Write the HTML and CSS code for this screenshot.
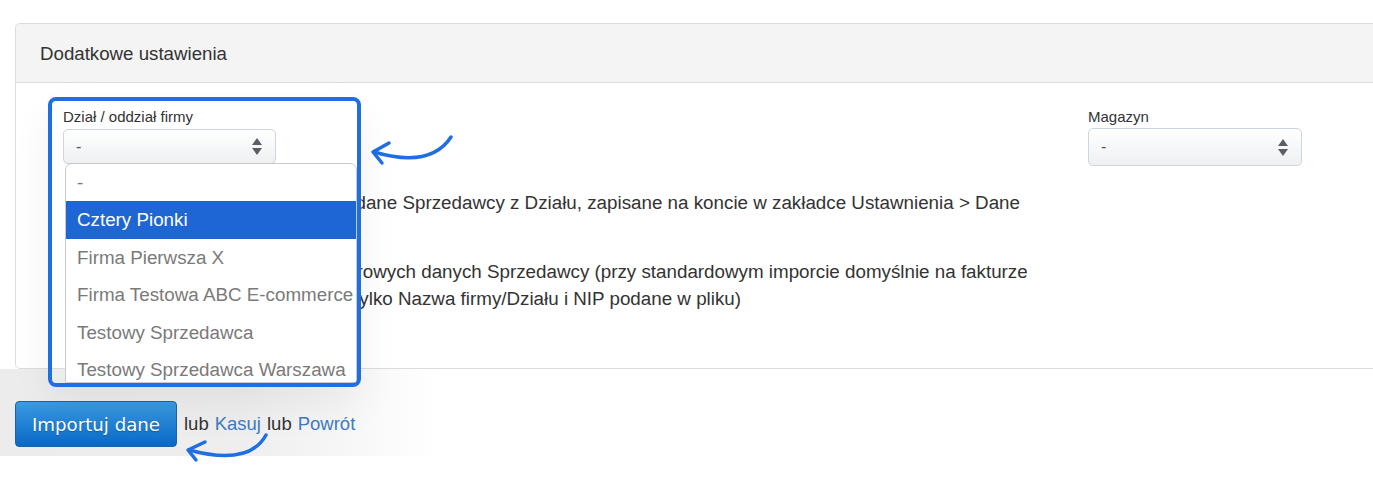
FILE: index.html
```html
<!DOCTYPE html>
<html lang="pl">
<head>
<meta charset="utf-8">
<title>Import danych</title>
<link rel="stylesheet" href="styles.css">
</head>
<body>
<div class="page">
  <section class="panel">
    <header class="panel-head">
      <h2 class="panel-title">Dodatkowe ustawienia</h2>
    </header>
    <div class="panel-body">
      <div class="fields">
        <div class="field field-dept">
          <label class="field-label">Dział / oddział firmy</label>
          <div class="select">
            <span class="select-value">-</span>
            <span class="select-arrows"><i class="up"></i><i class="down"></i></span>
          </div>
          <ul class="dropdown">
            <li>-</li>
            <li class="active">Cztery Pionki</li>
            <li>Firma Pierwsza X</li>
            <li>Firma Testowa ABC E-commerce</li>
            <li>Testowy Sprzedawca</li>
            <li>Testowy Sprzedawca Warszawa</li>
          </ul>
          <div class="focus-ring"></div>
        </div>
        <div class="field field-store">
          <label class="field-label">Magazyn</label>
          <div class="select select-tall">
            <span class="select-value">-</span>
            <span class="select-arrows"><i class="up"></i><i class="down"></i></span>
          </div>
        </div>
      </div>
      <div class="options">
        <label class="option"><input class="radio" type="radio" name="seller" checked>Uzupełnij dane Sprzedawcy z Działu, zapisane na koncie w zakładce Ustawnienia &gt; Dane Sprzedawcy</label>
        <label class="option"><input class="radio" type="radio" name="seller">Bez rejestrowych danych Sprzedawcy (przy standardowym imporcie domyślnie na fakturze pojawią się tylko Nazwa firmy/Działu i NIP podane w pliku)</label>
      </div>
    </div>
  </section>

  <div class="actions">
    <button class="btn-primary" type="button">Importuj dane</button>
    <span class="sep">lub</span>
    <a class="link" href="#">Kasuj</a>
    <span class="sep">lub</span>
    <a class="link" href="#">Powrót</a>
  </div>

  <svg class="pointer pointer-select" width="90" height="40" viewBox="0 0 90 40">
    <path d="M83 7 C 68 30, 40 32, 6 22" />
    <path d="M21 13 L 5 22 L 14 33" />
  </svg>
  <svg class="pointer pointer-button" width="90" height="40" viewBox="0 0 90 40">
    <path d="M84 5 C 72 27, 44 30, 7 20" />
    <path d="M23 12 L 6 20 L 14 30" />
  </svg>
</div>
</body>
</html>
```

FILE: styles.css
```css
html, body {
  margin: 0;
  padding: 0;
  background: #fff;
  overflow: hidden;
}

body {
  font-family: "Liberation Sans", Arial, sans-serif;
  color: #333;
  font-size: 18.5px;
}

.page {
  position: relative;
  width: 1373px;
  height: 478px;
  padding-top: 23px;
  box-sizing: border-box;
}

/* Settings panel, running off the right edge */
.panel {
  margin-left: 15px;
  width: 1400px;
  border: 1px solid #dcdcdc;
  border-radius: 5px 0 0 5px;
  background: #fff;
}

.panel-head {
  height: 58px;
  background: #f4f4f4;
  border-bottom: 1px solid #dcdcdc;
  border-radius: 5px 0 0 0;
  display: flex;
  align-items: center;
  padding-left: 24px;
}

.panel-title {
  margin: 0;
  font-size: 18.7px;
  font-weight: normal;
  color: #333;
  padding-top: 1px;
}

.panel-body {
  height: 285px;
  padding: 25px 0 0 47px;
  box-sizing: border-box;
}

.fields {
  display: flex;
  align-items: flex-start;
}

.field {
  position: relative;
  display: flex;
  flex-direction: column;
}

.field-store {
  margin-left: 812px;
}

.field-label {
  font-size: 15px;
  line-height: 17px;
  color: #333;
  margin-bottom: 4px;
}

.select {
  width: 213px;
  height: 35px;
  box-sizing: border-box;
  border: 1px solid #cdd5dd;
  border-radius: 5px;
  background: linear-gradient(#ffffff, #eef0f2);
  display: flex;
  align-items: center;
  justify-content: space-between;
  padding: 0 13px 0 12px;
  color: #555;
}

.select-tall {
  width: 214px;
  height: 38px;
  margin-top: -1px;
}

.select-value {
  font-size: 16px;
  line-height: 1;
}

.select-arrows {
  display: flex;
  flex-direction: column;
  gap: 3px;
}

.select-arrows i {
  display: block;
  width: 0;
  height: 0;
  border-left: 5px solid transparent;
  border-right: 5px solid transparent;
}

.select-arrows .up {
  border-bottom: 7px solid #5a5f66;
}

.select-arrows .down {
  border-top: 7px solid #5a5f66;
}

/* Open list of the department select */
.dropdown {
  position: absolute;
  left: 2px;
  top: 55px;
  width: 292px;
  height: 220px;
  margin: 0;
  padding: 0;
  list-style: none;
  background: #fff;
  border: 1px solid #c9c9c9;
  border-radius: 7px 7px 0 0;
  box-sizing: border-box;
  overflow: hidden;
  z-index: 2;
}

.dropdown li {
  height: 37.5px;
  line-height: 37.5px;
  padding-left: 11px;
  font-size: 18.8px;
  color: #7a7a7a;
  white-space: nowrap;
}

.dropdown li:first-child {
  height: 37px;
  line-height: 37px;
}

.dropdown li.active {
  background: #1d66d3;
  color: #fff;
}

.focus-ring {
  position: absolute;
  left: -15px;
  top: -11px;
  width: 313px;
  height: 290px;
  box-sizing: border-box;
  border: 4px solid #1f6fe3;
  border-radius: 8px;
  z-index: 3;
  box-shadow: 0 18px 40px rgba(0, 0, 0, 0.06);
}

.options {
  margin-top: 23px;
  width: 804px;
  padding-left: 193px;
  display: flex;
  flex-direction: column;
  gap: 15px;
}

.option {
  display: block;
  font-size: 18.8px;
  line-height: 27px;
  color: #333;
}

.radio {
  width: 13px;
  height: 13px;
  margin: 0 4px 0 0;
  vertical-align: -1px;
}

/* Buttons row under the panel */
.actions {
  display: flex;
  align-items: center;
  gap: 6px;
  width: 440px;
  height: 87px;
  padding: 32px 0 9px 15px;
  box-sizing: border-box;
  background: linear-gradient(to right, #ececec 0%, #eeeeee 55%, #ffffff 100%);
}

.btn-primary {
  width: 162px;
  height: 46px;
  border: 1px solid #1a63a8;
  border-radius: 4px;
  background: linear-gradient(#3b9be3, #0968c6);
  color: #fff;
  font-family: "DejaVu Sans", Verdana, sans-serif;
  font-size: 18.2px;
  text-shadow: 0 1px 1px rgba(0, 0, 0, 0.25);
  margin-right: 1px;
  padding: 0;
}

.sep {
  color: #333;
}

.link {
  color: #3d7cc1;
  text-decoration: none;
}

/* Hand-drawn pointers */
.pointer {
  position: absolute;
  fill: none;
  stroke: #1f6fe3;
  stroke-width: 3.5;
  stroke-linecap: round;
  stroke-linejoin: round;
}

.pointer-select {
  left: 368px;
  top: 130px;
}

.pointer-button {
  left: 182px;
  top: 430px;
}
```
